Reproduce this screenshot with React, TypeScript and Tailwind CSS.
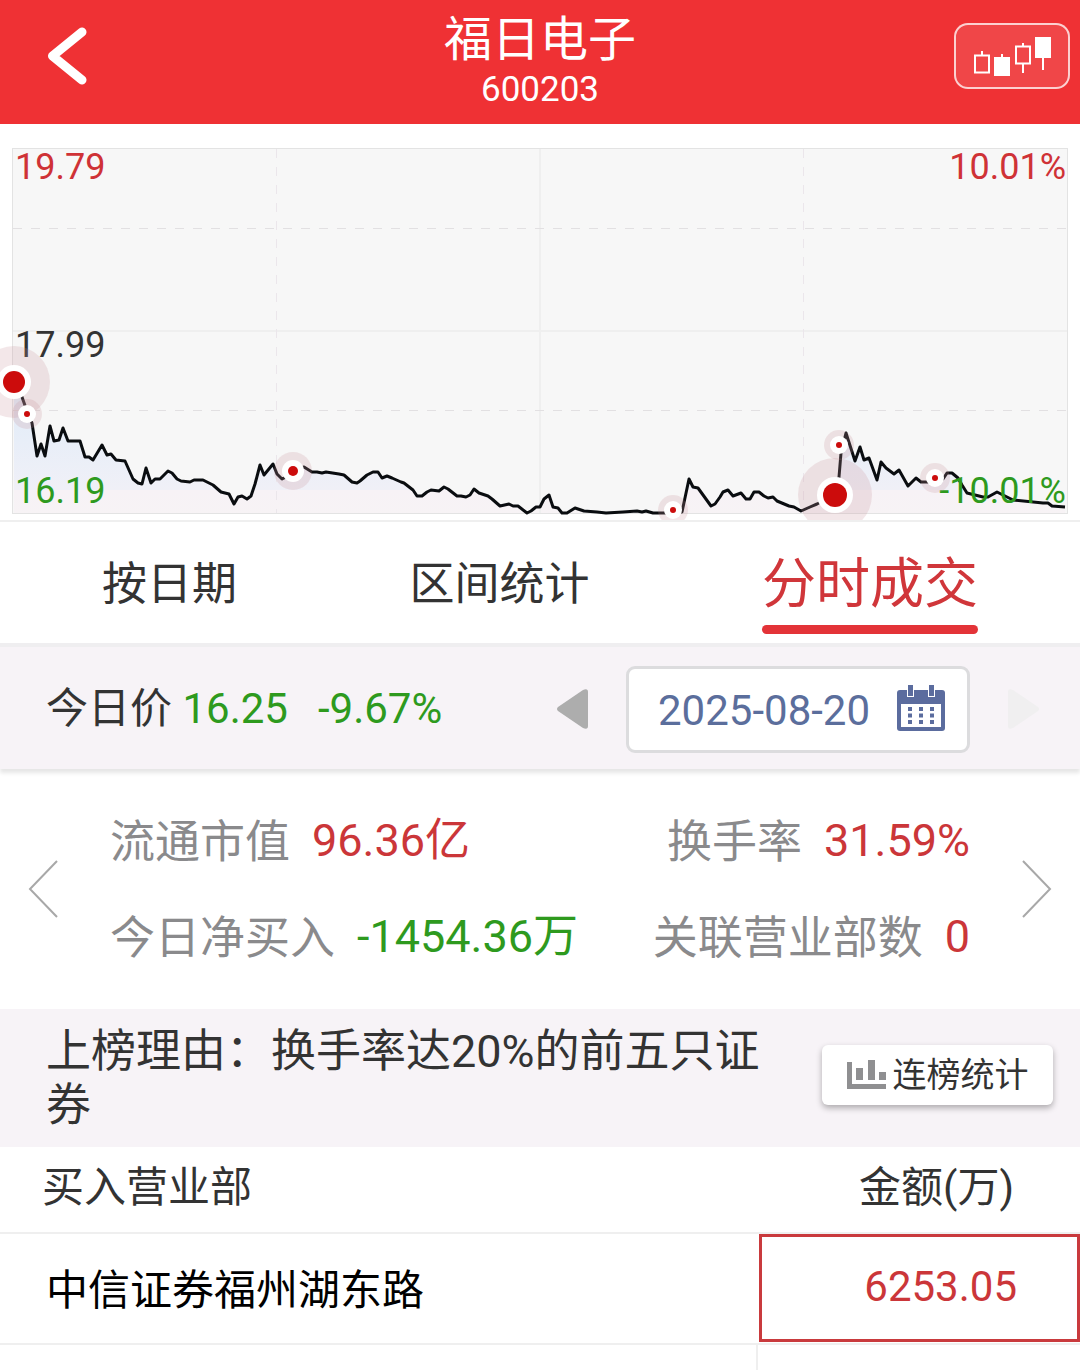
const price: [number, number][] = [
  [14, 382], [22, 397], [28, 414], [32, 423], [37, 456], [41, 444], [45, 456], [50, 426], [54, 441], [59, 440],
  [63, 428], [68, 441], [80, 441], [85, 457], [89, 457], [93, 460], [102, 445], [107, 455], [111, 454], [116, 460],
  [125, 461], [133, 479], [138, 483], [142, 484], [146, 468], [151, 483], [155, 479], [160, 479], [168, 471], [172, 473],
  [177, 479], [181, 481], [190, 482], [194, 480], [203, 480], [213, 485], [221, 492], [229, 494], [234, 504], [238, 497],
  [242, 496], [247, 499], [251, 496], [255, 484], [260, 465], [264, 475], [273, 464], [277, 474], [282, 479], [286, 477],
  [293, 471], [304, 467], [312, 472], [317, 472], [322, 473], [326, 472], [339, 474], [344, 475], [352, 482], [357, 483],
  [360, 481], [367, 475], [373, 472], [378, 472], [382, 478], [387, 476], [392, 478], [401, 482], [404, 483], [413, 490],
  [417, 496], [422, 496], [427, 492], [431, 490], [439, 491], [444, 487], [448, 489], [457, 496], [461, 496], [466, 497],
  [470, 495], [474, 489], [479, 493], [488, 496], [492, 499], [500, 506], [509, 504], [513, 506], [518, 506], [527, 513],
  [531, 511], [536, 507], [540, 507], [544, 499], [549, 495], [553, 507], [558, 508], [562, 513], [567, 513], [575, 508],
  [584, 511], [597, 512], [606, 513], [623, 512], [637, 511], [642, 512], [646, 511], [653, 513], [665, 513], [682, 512],
  [689, 479], [693, 487], [698, 488], [711, 506], [715, 504], [720, 497], [723, 492], [728, 490], [733, 496], [741, 493],
  [746, 499], [750, 499], [754, 492], [759, 492], [764, 496], [768, 498], [773, 497], [777, 501], [789, 506], [794, 507],
  [801, 511], [810, 507], [817, 504], [835, 495], [839, 477], [841, 453], [846, 433], [855, 461], [860, 447], [864, 460],
  [869, 458], [877, 480], [881, 462], [886, 468], [894, 474], [899, 470], [908, 486], [916, 478], [921, 482], [928, 482],
  [935, 478], [943, 479], [947, 473], [952, 473], [958, 478], [962, 485], [967, 493], [983, 497], [988, 497], [997, 492],
  [1013, 500], [1043, 503], [1048, 503], [1052, 506], [1065, 507],
];

const markers = [
  { x: 14, y: 382, halo: 36, ring: 17, dot: 11 },
  { x: 27, y: 414, halo: 15, ring: 9, dot: 3 },
  { x: 293, y: 471, halo: 19, ring: 11, dot: 5 },
  { x: 673, y: 510, halo: 15, ring: 9, dot: 3 },
  { x: 835, y: 495, halo: 37, ring: 18, dot: 12 },
  { x: 839, y: 445, halo: 15, ring: 9, dot: 3 },
  { x: 935, y: 478, halo: 15, ring: 9, dot: 3 },
];

const tabs = [
  { name: '按日期', active: false },
  { name: '区间统计', active: false },
  { name: '分时成交', active: true },
];

const rows = [{ name: '中信证券福州湖东路', amount: '6253.05' }];

const Header = () => (
  <header className="grid h-[124px] grid-cols-[1fr_auto_1fr] items-center bg-[#ef3134] text-white">
    <button className="ml-[46px] justify-self-start" aria-label="返回">
      <svg width="42" height="60" viewBox="0 0 42 60" fill="none" className="-mt-3">
        <path d="M36 6 6.500 30 36 54" stroke="white" strokeWidth="9" strokeLinecap="round" strokeLinejoin="round" />
      </svg>
    </button>
    <div className="pb-1 text-center">
      <h1 className="text-[48px] leading-[60px]">福日电子</h1>
      <p className="text-[35px] leading-[40px]">600203</p>
    </div>
    <button
      className="mr-[10px] flex h-[66px] w-[116px] -mt-3 items-center justify-center justify-self-end rounded-[14px] border-2 border-white/75 bg-white/10"
      aria-label="K线"
    >
      <svg width="78" height="42" viewBox="0 0 78 42" fill="none" stroke="white" strokeWidth="2">
        <path d="M2 20.500h14v17H2zM9 16v4" />
        <path d="M22 23h14v17H22z" fill="white" />
        <path d="M29 19v4M43 11.500h14v17H43zM50 8v4M50 29v9" />
        <path d="M63 3h14v19H63z" fill="white" />
        <path d="M70 22v13" />
      </svg>
    </button>
  </header>
);

const Chart = () => {
  const line = price.map(([x, y]) => `${x},${y}`).join(' ');
  return (
    <svg viewBox="0 124 1080 396" className="block w-full text-[36px]" role="img" aria-label="分时走势">
      <defs>
        <linearGradient id="area" gradientUnits="userSpaceOnUse" x1="0" y1="382" x2="0" y2="514">
          <stop offset="0" stopColor="#dfebf8" />
          <stop offset="0.45" stopColor="#e8eef8" />
          <stop offset="0.82" stopColor="#f0f0f7" />
          <stop offset="0.82" stopColor="#f7f2f6" />
          <stop offset="1" stopColor="#f7f3f5" />
        </linearGradient>
      </defs>
      <rect x="12.500" y="148.500" width="1055" height="365" fill="#f7f7f7" stroke="#e3e3e3" />
      <polygon points={`14,513 ${line} 1065,513`} fill="url(#area)" />
      <g stroke="#efefef" strokeWidth="2">
        <path d="M13 331h1054M540 149v364" />
        <path d="M13 228.500h1054M13 410.500h1054" strokeWidth="1" stroke="#e2e0e2" strokeDasharray="9 9" />
        <path d="M276.500 149v364M803.500 149v364" strokeWidth="1" stroke="#ebe6eb" strokeDasharray="9 9" />
      </g>
      <polyline points={line} fill="none" stroke="#0a0d10" strokeWidth="3" strokeLinejoin="round" />
      <text x="15" y="179" fill="#cf3236">19.79</text>
      <text x="1066" y="179" fill="#cf3236" textAnchor="end">10.01%</text>
      <text x="15" y="357" fill="#333">17.99</text>
      <text x="15" y="503" fill="#2e9a1e">16.19</text>
      <text x="1066" y="503" fill="#2e9a1e" textAnchor="end">-10.01%</text>
      {markers.map((m) => (
        <g key={m.x}>
          <circle cx={m.x} cy={m.y} r={m.halo} fill="#c8909c" fillOpacity="0.22" />
          <circle cx={m.x} cy={m.y} r={m.ring} fill="white" />
          <circle cx={m.x} cy={m.y} r={m.dot} fill="#cc0c0c" />
        </g>
      ))}
    </svg>
  );
};

const Tabs = () => (
  <nav className="flex h-[123px] items-stretch justify-between border-t-2 border-[#efefef] px-[102px]">
    {tabs.map((tab) => (
      <button
        key={tab.name}
        className={
          tab.active
            ? 'flex flex-col items-center pt-7 text-[54px] leading-[70px] text-[#d0363a]'
            : 'pt-1 text-[45px] text-[#333]'
        }
      >
        {tab.name}
        {tab.active && <span className="mt-[5px] h-[9px] w-full rounded-full bg-[#e33338]" />}
      </button>
    ))}
  </nav>
);

const DateBar = () => (
  <section className="flex h-[126px] items-center border-t-4 border-[#efeef0] bg-[#f7f3f7] pt-0.5 pr-10 pl-[46px] text-[42px] shadow-[0_4px_4px_rgba(0,0,0,0.1)]">
    <p className="pb-0.5 text-[#333]">
      今日价 <span className="text-[#2e9a1e]">16.25</span>
      <span className="ml-[30px] text-[#2e9a1e]">-9.67%</span>
    </p>
    <button className="ml-auto" aria-label="前一天">
      <svg width="32" height="40" viewBox="0 0 32 40">
        <path d="M27 1 2 18q-2 2 0 4l25 17q5 2 5-2V3q0-4-5-2z" fill="#adadad" />
      </svg>
    </button>
    <button className="mx-[38px] flex h-[87px] w-[344px] items-center justify-between rounded-[9px] border-3 border-[#dcdcde] bg-white pt-0.5 pr-[22px] pl-[29px] text-[#5b6e9c]">
      2025-08-20
      <svg width="48" height="46" viewBox="0 0 48 46" className="-mt-1">
        <path d="M3 5h42q3 0 3 3v35q0 3-3 3H3q-3 0-3-3V8q0-3 3-3z" fill="#5b6c9e" />
        <path d="M4 19h40v23H4z" fill="white" />
        <path d="M10 0h7v12h-7zM31 0h7v12h-7z" fill="white" />
        <path d="M11 0h5v11h-5zM32 0h5v11h-5z" fill="#5b6c9e" />
        <path d="M13 22v18M24 22v18M35 22v18" stroke="#5b6c9e" strokeWidth="4" strokeDasharray="4 2.500" />
      </svg>
    </button>
    <button aria-label="后一天" disabled>
      <svg width="32" height="40" viewBox="0 0 32 40">
        <path d="M5 1l25 17q2 2 0 4L5 39q-5 2-5-2V3q0-4 5-2z" fill="#f0eff0" />
      </svg>
    </button>
  </section>
);

const Stat = ({ label, value, color }: { label: string; value: string; color: string }) => (
  <div className="flex gap-[22px]">
    <dt className="pt-0.5 text-[#8a8a8c]">{label}</dt>
    <dd className={color}>{value}</dd>
  </div>
);

const Stats = () => (
  <section className="flex h-[240px] items-center px-7">
    <button aria-label="上一条">
      <svg width="30" height="58" viewBox="0 0 30 58" fill="none" stroke="#a8a8a8" strokeWidth="2">
        <path d="M29 1 2 29l27 28" />
      </svg>
    </button>
    <dl className="mx-[52px] flex flex-1 flex-col gap-[34px] pt-0.5 text-[45px] leading-[60px]">
      <div className="flex justify-between">
        <Stat label="流通市值" value="96.36亿" color="text-[#cb3639]" />
        <Stat label="换手率" value="31.59%" color="text-[#cb3639]" />
      </div>
      <div className="flex justify-between">
        <Stat label="今日净买入" value="-1454.36万" color="text-[#2e9a1e]" />
        <Stat label="关联营业部数" value="0" color="text-[#cb3639]" />
      </div>
    </dl>
    <button aria-label="下一条">
      <svg width="30" height="58" viewBox="0 0 30 58" fill="none" stroke="#a8a8a8" strokeWidth="2">
        <path d="M1 1l27 28L1 57" />
      </svg>
    </button>
  </section>
);

const Reason = () => (
  <section className="flex items-center justify-between bg-[#f7f3f7] pt-4 pr-[27px] pb-3.5 pl-[46px]">
    <p className="w-[720px] text-[45px] leading-[54px] text-[#333]">上榜理由：换手率达20%的前五只证券</p>
    <button className="mb-2 flex h-[60px] w-[231px] items-center justify-center gap-[7px] rounded-md bg-white text-[34px] text-[#333] shadow-[0_3px_6px_rgba(0,0,0,0.3)]">
      <svg width="39" height="30" viewBox="0 0 39 30" fill="#8f8f91">
        <path d="M0 2h5v22h34v5H0zM9 8h7v12H9zM21 0h7v20h-7zM32 12h7v8h-7z" />
      </svg>
      连榜统计
    </button>
  </section>
);

const Branches = () => (
  <table className="w-full table-fixed border-separate border-spacing-0 text-[42px]">
    <thead>
      <tr className="h-[87px] text-[#333]">
        <th className="w-[70%] border-b-2 border-[#efefef] pb-1 pl-[42px] text-left font-normal">买入营业部</th>
        <th className="w-[30%] border-b-2 border-[#efefef] pr-[66px] pb-1 text-right font-normal">金额(万)</th>
      </tr>
    </thead>
    <tbody>
      {rows.map((row) => (
        <tr key={row.name} className="h-[109px]">
          <td className="pt-1 pl-[46px] text-black">{row.name}</td>
          <td className="p-0 pb-px pl-[3px] text-[#cb3639]">
            <div className="flex h-[108px] items-center justify-end border-3 border-[#c93a3d] pr-[60px] pb-1">{row.amount}</div>
          </td>
        </tr>
      ))}
      <tr className="h-7">
        <td className="border-t-2 border-[#efefef]"></td>
        <td className="border-t-2 border-l-2 border-[#efefef]"></td>
      </tr>
    </tbody>
  </table>
);

const App = () => (
  <div className="w-full overflow-hidden bg-white font-['Roboto','Noto_Sans_CJK_SC',sans-serif]" lang="zh-CN">
    <Header />
    <Chart />
    <Tabs />
    <DateBar />
    <Stats />
    <Reason />
    <Branches />
  </div>
);

export default App;
